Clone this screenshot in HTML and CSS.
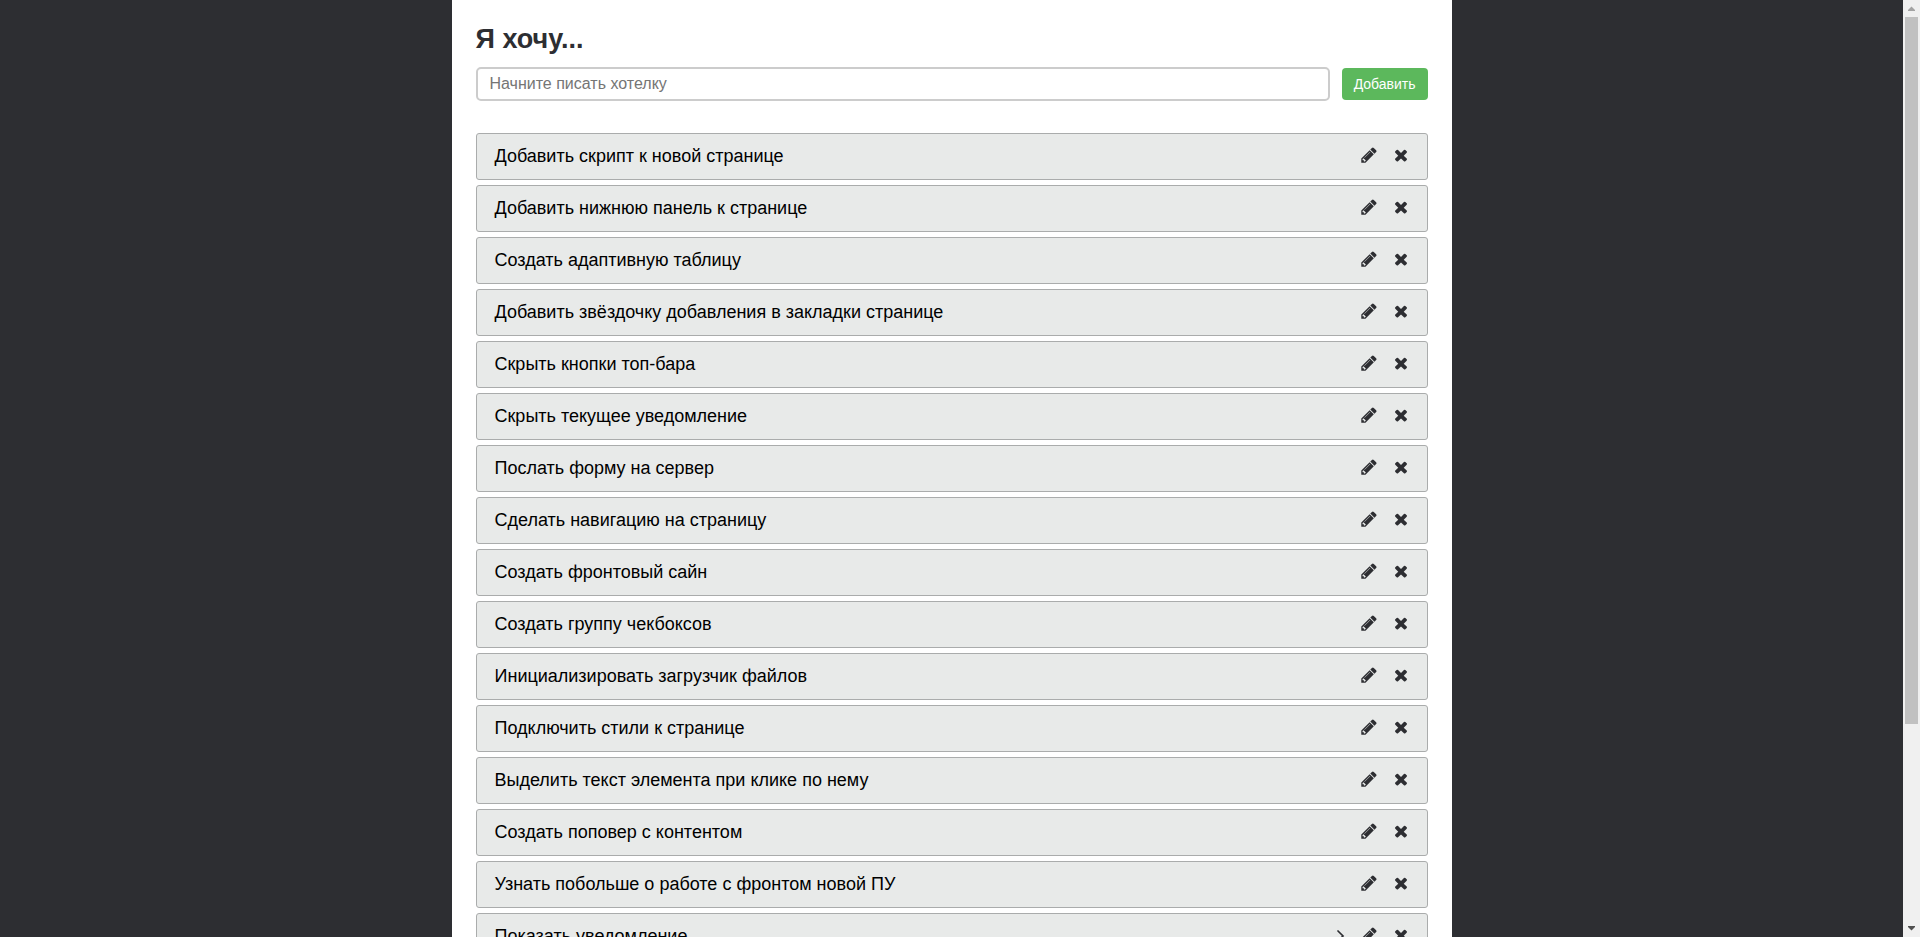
FILE: index.html
```
<!DOCTYPE html>
<html lang="ru">
<head>
<meta charset="utf-8">
<title>Я хочу...</title>
<link rel="stylesheet" href="styles.css">
</head>
<body>
<svg class="sprite" aria-hidden="true">
  <symbol id="pencil" viewBox="0 0 1792 1792"><path d="M491 1536l91-91-235-235-91 91v107h128v128h107zm523-928q0-22-22-22-10 0-17 7l-542 542q-7 7-7 17 0 22 22 22 10 0 17-7l542-542q7-7 7-17zm-54-192l416 416-832 832h-416v-416zm683 96q0 53-37 90l-166 166-416-416 166-165q36-38 90-38 53 0 91 38l235 234q37 39 37 91z"/></symbol>
  <symbol id="times" viewBox="0 0 1792 1792"><path d="M1490 1322q0 40-28 68l-136 136q-28 28-68 28t-68-28l-294-294-294 294q-28 28-68 28t-68-28l-136-136q-28-28-28-68t28-68l294-294-294-294q-28-28-28-68t28-68l136-136q28-28 68-28t68 28l294 294 294-294q28-28 68-28t68 28l136 136q28 28 28 68t-28 68l-294 294 294 294q28 28 28 68z"/></symbol>
  <symbol id="chevron" viewBox="0 0 18 18"><path d="M10 5l5 5-5 5" fill="none" stroke="currentColor" stroke-width="1.700" stroke-linecap="round"/></symbol>
</svg>
<div class="viewport">
  <div class="scroll-area">
    <main class="page">
      <h1 class="title"><label for="wish">Я хочу...</label></h1>
      <form class="add-form">
        <input class="add-input" id="wish" type="text" placeholder="Начните писать хотелку">
        <button class="add-button" type="button">Добавить</button>
      </form>
      <ul class="wishes" id="wishes"></ul>
    </main>
  </div>
  <div class="scrollbar" aria-hidden="true">
    <svg class="arrow arrow-up" viewBox="0 0 17 17"><path d="M5 11v-1l3.500-3.500 3.500 3.500v1z"/></svg>
    <div class="track"><div class="thumb"></div></div>
    <svg class="arrow" viewBox="0 0 17 17"><path d="M5 6v1l3.500 3.500 3.500-3.500v-1z"/></svg>
  </div>
</div>
<script src="script.js"></script>
</body>
</html>
```
FILE: styles.css
```
* {
  box-sizing: border-box;
}

body {
  margin: 0;
  background: #2d2e32;
  color: #2d2e32;
  font-family: Arial, "Liberation Sans", sans-serif;
}

.sprite {
  display: none;
}

.viewport {
  display: flex;
  height: 100vh;
}

.scroll-area {
  flex: 1;
  overflow: hidden;
}

.page {
  max-width: 1000px;
  min-height: 100%;
  margin: 0 auto;
  padding: 23px 24px;
  background: #fff;
}

.title {
  margin: 0 0 12px;
  font-size: 27px;
  line-height: 32px;
}

.add-form {
  display: flex;
  align-items: center;
  gap: 12px;
  margin-bottom: 32px;
}

.add-input {
  flex: 1;
  height: 34px;
  padding: 0 12px;
  border: 2px solid #ccc;
  border-radius: 5px;
  background: #fff;
  font: 16px Arial, "Liberation Sans", sans-serif;
}

.add-input::placeholder {
  color: #757575;
}

.add-button {
  height: 32px;
  padding: 0 12px;
  border: 0;
  border-radius: 4px;
  background: #5cb85c;
  color: #fff;
  font: 14px Arial, "Liberation Sans", sans-serif;
}

.wishes {
  display: flex;
  flex-direction: column;
  gap: 5px;
  margin: 0;
  padding: 0;
  list-style: none;
}

.wish {
  display: flex;
  align-items: center;
  gap: 14px;
  height: 47px;
  padding: 0 17px 2px 18px;
  border: 1px solid #aaacac;
  border-radius: 3px;
  background: #e8eae9;
}

.wish-text {
  flex: 1;
  color: #000;
  font-size: 18px;
  line-height: 22px;
}

.icon-button {
  display: flex;
  padding: 0 0 2px;
  border: 0;
  background: none;
  color: #2d2e32;
}

.icon {
  width: 18px;
  height: 18px;
  fill: currentColor;
}

.scrollbar {
  display: flex;
  flex-direction: column;
  width: 17px;
  background: #f0f0f0;
}

.arrow {
  width: 17px;
  height: 17px;
  fill: #505050;
}

.arrow-up {
  fill: #a3a3a3;
}

.track {
  flex: 1;
  padding: 0 2px;
}

.thumb {
  height: 78.3%;
  background: #c1c1c1;
}
```
FILE: script.js
```
const wishes = [
  { text: "Добавить скрипт к новой странице" },
  { text: "Добавить нижнюю панель к странице" },
  { text: "Создать адаптивную таблицу" },
  { text: "Добавить звёздочку добавления в закладки странице" },
  { text: "Скрыть кнопки топ-бара" },
  { text: "Скрыть текущее уведомление" },
  { text: "Послать форму на сервер" },
  { text: "Сделать навигацию на страницу" },
  { text: "Создать фронтовый сайн" },
  { text: "Создать группу чекбоксов" },
  { text: "Инициализировать загрузчик файлов" },
  { text: "Подключить стили к странице" },
  { text: "Выделить текст элемента при клике по нему" },
  { text: "Создать поповер с контентом" },
  { text: "Узнать побольше о работе с фронтом новой ПУ" },
  { text: "Показать уведомление", nested: true }
];

const button = (icon, label) =>
  `<button class="icon-button" type="button" aria-label="${label}"><svg class="icon"><use href="#${icon}"/></svg></button>`;

document.getElementById("wishes").innerHTML = wishes.map(w =>
  `<li class="wish"><span class="wish-text">${w.text}</span>` +
  (w.nested ? button("chevron", "Раскрыть") : "") +
  button("pencil", "Изменить") + button("times", "Удалить") + "</li>"
).join("");
```
